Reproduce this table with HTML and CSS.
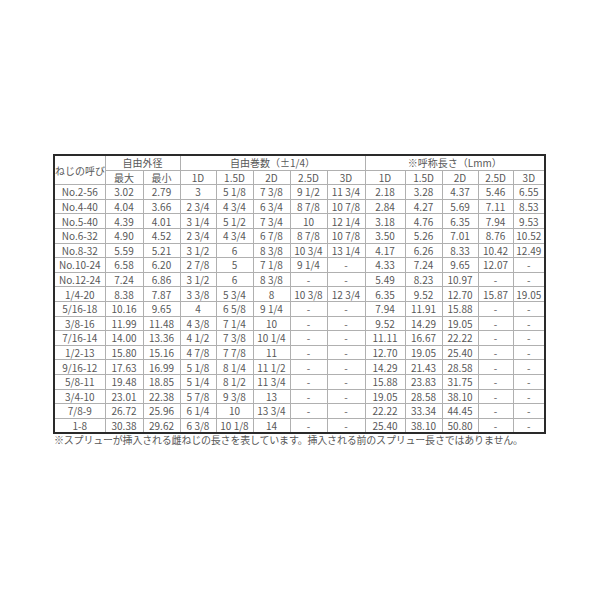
FILE: index.html
```html
<!DOCTYPE html>
<html lang="ja">
<head>
<meta charset="utf-8">
<link rel="stylesheet" href="styles.css">
</head>
<body>
<div class="wrap">
<table class="spec">
<colgroup>
<col class="c0"><col class="c1"><col class="c2"><col class="c3"><col class="c4"><col class="c5"><col class="c6"><col class="c7"><col class="c8"><col class="c9"><col class="c10"><col class="c11"><col class="c12">
</colgroup>
<thead>
<tr><th rowspan="2">ねじの呼び</th><th colspan="2">自由外径</th><th colspan="5">自由巻数（±1/4）</th><th colspan="5">※呼称長さ（Lmm）</th></tr>
<tr><th>最大</th><th>最小</th><th>1D</th><th>1.5D</th><th>2D</th><th>2.5D</th><th>3D</th><th>1D</th><th>1.5D</th><th>2D</th><th>2.5D</th><th>3D</th></tr>
</thead>
<tbody>
<tr><td>No.2-56</td><td>3.02</td><td>2.79</td><td>3</td><td>5 1/8</td><td>7 3/8</td><td>9 1/2</td><td>11 3/4</td><td>2.18</td><td>3.28</td><td>4.37</td><td>5.46</td><td>6.55</td></tr>
<tr><td>No.4-40</td><td>4.04</td><td>3.66</td><td>2 3/4</td><td>4 3/4</td><td>6 3/4</td><td>8 7/8</td><td>10 7/8</td><td>2.84</td><td>4.27</td><td>5.69</td><td>7.11</td><td>8.53</td></tr>
<tr><td>No.5-40</td><td>4.39</td><td>4.01</td><td>3 1/4</td><td>5 1/2</td><td>7 3/4</td><td>10</td><td>12 1/4</td><td>3.18</td><td>4.76</td><td>6.35</td><td>7.94</td><td>9.53</td></tr>
<tr><td>No.6-32</td><td>4.90</td><td>4.52</td><td>2 3/4</td><td>4 3/4</td><td>6 7/8</td><td>8 7/8</td><td>10 7/8</td><td>3.50</td><td>5.26</td><td>7.01</td><td>8.76</td><td>10.52</td></tr>
<tr><td>No.8-32</td><td>5.59</td><td>5.21</td><td>3 1/2</td><td>6</td><td>8 3/8</td><td>10 3/4</td><td>13 1/4</td><td>4.17</td><td>6.26</td><td>8.33</td><td>10.42</td><td>12.49</td></tr>
<tr><td>No.10-24</td><td>6.58</td><td>6.20</td><td>2 7/8</td><td>5</td><td>7 1/8</td><td>9 1/4</td><td>-</td><td>4.33</td><td>7.24</td><td>9.65</td><td>12.07</td><td>-</td></tr>
<tr><td>No.12-24</td><td>7.24</td><td>6.86</td><td>3 1/2</td><td>6</td><td>8 3/8</td><td>-</td><td>-</td><td>5.49</td><td>8.23</td><td>10.97</td><td>-</td><td>-</td></tr>
<tr><td>1/4-20</td><td>8.38</td><td>7.87</td><td>3 3/8</td><td>5 3/4</td><td>8</td><td>10 3/8</td><td>12 3/4</td><td>6.35</td><td>9.52</td><td>12.70</td><td>15.87</td><td>19.05</td></tr>
<tr><td>5/16-18</td><td>10.16</td><td>9.65</td><td>4</td><td>6 5/8</td><td>9 1/4</td><td>-</td><td>-</td><td>7.94</td><td>11.91</td><td>15.88</td><td>-</td><td>-</td></tr>
<tr><td>3/8-16</td><td>11.99</td><td>11.48</td><td>4 3/8</td><td>7 1/4</td><td>10</td><td>-</td><td>-</td><td>9.52</td><td>14.29</td><td>19.05</td><td>-</td><td>-</td></tr>
<tr><td>7/16-14</td><td>14.00</td><td>13.36</td><td>4 1/2</td><td>7 3/8</td><td>10 1/4</td><td>-</td><td>-</td><td>11.11</td><td>16.67</td><td>22.22</td><td>-</td><td>-</td></tr>
<tr><td>1/2-13</td><td>15.80</td><td>15.16</td><td>4 7/8</td><td>7 7/8</td><td>11</td><td>-</td><td>-</td><td>12.70</td><td>19.05</td><td>25.40</td><td>-</td><td>-</td></tr>
<tr><td>9/16-12</td><td>17.63</td><td>16.99</td><td>5 1/8</td><td>8 1/4</td><td>11 1/2</td><td>-</td><td>-</td><td>14.29</td><td>21.43</td><td>28.58</td><td>-</td><td>-</td></tr>
<tr><td>5/8-11</td><td>19.48</td><td>18.85</td><td>5 1/4</td><td>8 1/2</td><td>11 3/4</td><td>-</td><td>-</td><td>15.88</td><td>23.83</td><td>31.75</td><td>-</td><td>-</td></tr>
<tr><td>3/4-10</td><td>23.01</td><td>22.38</td><td>5 7/8</td><td>9 3/8</td><td>13</td><td>-</td><td>-</td><td>19.05</td><td>28.58</td><td>38.10</td><td>-</td><td>-</td></tr>
<tr><td>7/8-9</td><td>26.72</td><td>25.96</td><td>6 1/4</td><td>10</td><td>13 3/4</td><td>-</td><td>-</td><td>22.22</td><td>33.34</td><td>44.45</td><td>-</td><td>-</td></tr>
<tr><td>1-8</td><td>30.38</td><td>29.62</td><td>6 3/8</td><td>10 1/8</td><td>14</td><td>-</td><td>-</td><td>25.40</td><td>38.10</td><td>50.80</td><td>-</td><td>-</td></tr>
</tbody>
</table>
<p class="note">※スプリューが挿入される雌ねじの長さを表しています。挿入される前のスプリュー長さではありません。</p>
</div>
</body>
</html>
```

FILE: styles.css
```css
html, body {
  margin: 0;
  padding: 0;
  background: #fff;
}
.wrap {
  padding: 154px 0 0 53px;
  font-family: "Noto Sans CJK JP", "Noto Sans", sans-serif;
  color: #585858;
}
.spec {
  border-collapse: collapse;
  table-layout: fixed;
  width: 491px;
  border: 2px solid #2a2a2a;
}
.spec th, .spec td {
  border: 1px solid #b0b0b0;
  padding: 0;
  height: 13.6px;
  line-height: 13px;
  font-size: 10px;
  font-weight: normal;
  text-align: center;
  white-space: nowrap;
  overflow: hidden;
}
.spec tbody td:first-child,
.spec thead tr:first-child th:first-child {
  border-left: 2px solid #2a2a2a;
}
.c0 { width: 51px; }
.c1 { width: 38px; }
.c2 { width: 37px; }
.c3 { width: 36px; }
.c4 { width: 37px; }
.c5 { width: 37px; }
.c6 { width: 37px; }
.c7 { width: 38px; }
.c8 { width: 40px; }
.c9 { width: 37px; }
.c10 { width: 36px; }
.c11 { width: 35px; }
.c12 { width: 32px; }
.note {
  margin: 0 0 0 1px;
  font-size: 10px;
  line-height: 12px;
  letter-spacing: -0.2px;
  color: #585858;
}
```
